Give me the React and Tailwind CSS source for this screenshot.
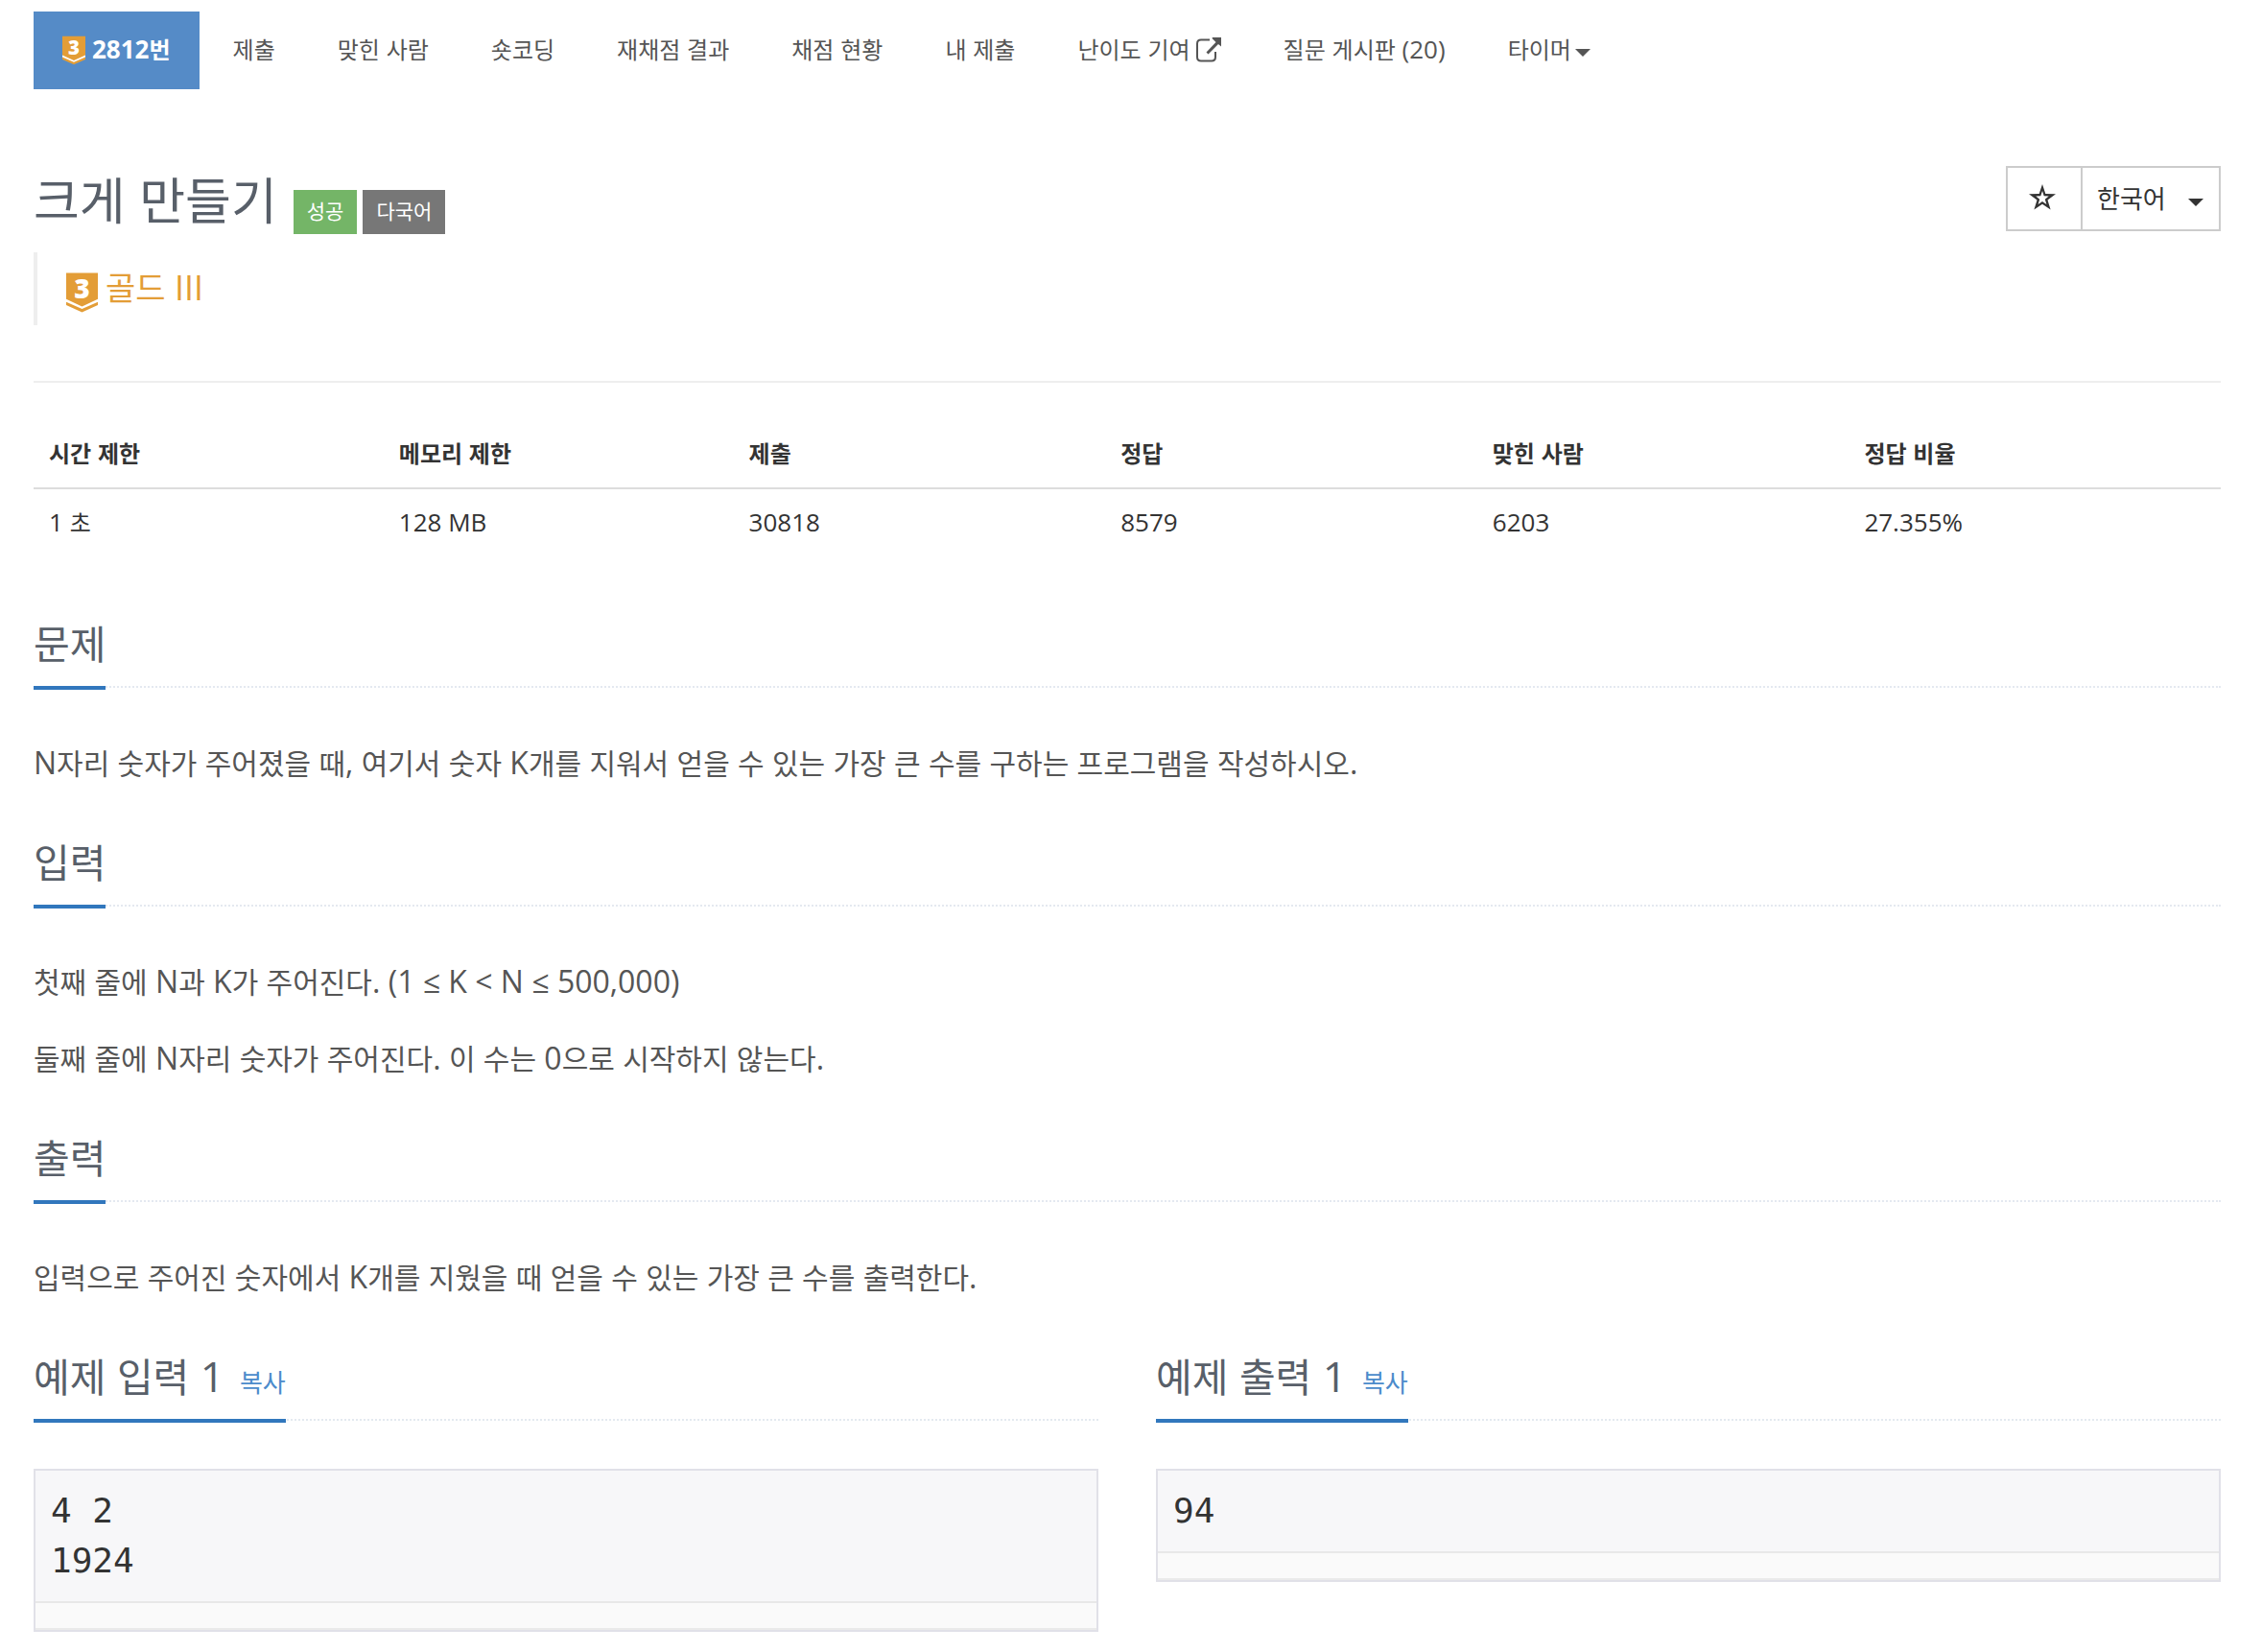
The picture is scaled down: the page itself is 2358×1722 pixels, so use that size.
const LATIN = /([ A-Za-z0-9(),.≤<%]+)/;

// Hangul glyphs use the surrounding size; Latin runs and spaces are set slightly larger.
function Mixed({ children, latin }) {
  return children.split(LATIN).map((part, i) =>
    i % 2 ? (
      <span key={i} className={latin}>
        {part}
      </span>
    ) : (
      part
    )
  );
}

function TierBadge({ className }) {
  return (
    <svg viewBox="0 0 34 42" overflow="visible" className={className} aria-hidden="true">
      <path d="M0 27L17 34.500L34 27V33L17 40.500L0 33Z" fill="#fff" />
      <path d="M0 0H34V28L17 36L0 28Z" fill="#e39d37" />
      <path d="M0 31L17 38.500L34 31V34.500L17 42L0 34.500Z" fill="#e39d37" />
      <text x="17" y="27" textAnchor="middle" fontSize="29" className="fill-white font-['Open_Sans',sans-serif] font-extrabold">
        3
      </text>
    </svg>
  );
}

function Caret({ className }) {
  return (
    <svg viewBox="0 0 16 8" className={className} aria-hidden="true">
      <path d="M0 0H16L8 8Z" fill="currentColor" />
    </svg>
  );
}

function ExternalIcon() {
  return (
    <svg viewBox="0 0 26 26" className="size-[26px]" aria-hidden="true">
      <path
        d="M14 2.500H5Q1 2.500 1 6.500V20.500Q1 24.500 5 24.500H16Q20 24.500 20 20.500V15"
        fill="none"
        stroke="currentColor"
        strokeWidth="2"
      />
      <path d="M17 0H26V9.500L23 7L12.500 17.500L10.500 15.500L20.500 5L16.500 1Z" fill="currentColor" />
    </svg>
  );
}

const navItems = [
  { label: "제출" },
  { label: "맞힌 사람" },
  { label: "숏코딩" },
  { label: "재채점 결과" },
  { label: "채점 현황" },
  { label: "내 제출" },
  { label: "난이도 기여", icon: true },
  { label: "질문 게시판 (20)" },
];

function Nav() {
  return (
    <nav className="flex h-[81px] items-stretch gap-[5px] text-[24px] text-[#555]">
      <a href="#problem" className="flex items-center gap-[7px] bg-[#558bc7] px-[30px] pb-[2px] font-bold text-white">
        <TierBadge className="mt-[2px] h-[31px] w-6" />
        <span>
          <Mixed latin="text-[26px] leading-none">2812번</Mixed>
        </span>
      </a>
      {navItems.map((item) => (
        <a key={item.label} href="#nav" className="flex items-center gap-[6px] px-[30px] pb-[2px]">
          <span>
            <Mixed latin="text-[26px] leading-none">{item.label}</Mixed>
          </span>
          {item.icon && <ExternalIcon />}
        </a>
      ))}
      <button type="button" className="flex items-center gap-1 px-[30px] pb-[2px]">
        타이머
        <Caret className="mt-[6px] h-2 w-4" />
      </button>
    </nav>
  );
}

function Headline({ children, action }) {
  return (
    <div className="flex border-b-2 border-dotted border-[#e4e9f0]">
      <div className="-mb-1 flex items-baseline gap-4 border-b-4 border-[#3177bd] pb-[14px]">
        <h2 className="text-[41px] leading-[60px] text-[#585f69]">
          <Mixed latin="text-[44px] leading-none">{children}</Mixed>
        </h2>
        {action && (
          <button type="button" className="text-[26px] text-[#4b8bcb]">
            {action}
          </button>
        )}
      </div>
    </div>
  );
}

function Section({ title, paragraphs }) {
  return (
    <section className="mb-[43px]">
      <Headline>{title}</Headline>
      <div className="mt-[49px] flex flex-col gap-5">
        {paragraphs.map((p) => (
          <p key={p} className="text-[30px] leading-[60px] text-[#555]">
            <Mixed latin="text-[32px] leading-none">{p}</Mixed>
          </p>
        ))}
      </div>
    </section>
  );
}

function Sample({ title, text }) {
  return (
    <section>
      <Headline action="복사">{title}</Headline>
      <div className="mt-[50px] border-2 border-[#e1e1e8] bg-[#fafafa]">
        <pre className="border-b-2 border-[#e8e8e8] bg-[#f7f7f9] p-4 font-['DejaVu_Sans_Mono',monospace] text-[36px] leading-[52px] text-[#333]">
          {text}
        </pre>
        <div className="h-7 border-b-2 border-[#eaeaea]" />
      </div>
    </section>
  );
}

const stats = [
  ["시간 제한", "1 초", "w-[16%]"],
  ["메모리 제한", "128 MB", "w-[16%]"],
  ["제출", "30818", "w-[17%]"],
  ["정답", "8579", "w-[17%]"],
  ["맞힌 사람", "6203", "w-[17%]"],
  ["정답 비율", "27.355%", "w-[17%]"],
];

export default function App() {
  return (
    <div className="bg-white pt-3 pr-[43px] pb-5 pl-[35px] font-['Open_Sans','Noto_Sans_CJK_KR',sans-serif] text-[#333]">
      <Nav />

      <header className="mt-20 flex items-start justify-between">
        <div className="flex items-end">
          <h1 className="text-[52px] leading-[71px] text-[#585f69]">
            <Mixed latin="text-[56px] leading-none">크게 만들기</Mixed>
          </h1>
          <div className="ml-[17px] flex gap-[6px] text-[21px] text-white">
            <span className="flex h-[46px] items-center bg-[#74b567] px-[14px]">성공</span>
            <span className="flex h-[46px] items-center bg-[#777] px-[14px]">다국어</span>
          </div>
        </div>
        <div className="flex h-[68px] border-2 border-[#ccc]">
          <button type="button" aria-label="즐겨찾기" className="flex w-[78px] items-center justify-center border-r-2 border-[#ccc] pr-1 pb-1">
            <svg viewBox="0 0 28 27" className="h-[27px] w-7" aria-hidden="true">
              <path
                d="M14 0L17.300 9.900L28 10.200L19.500 16.600L22.600 26.600L14 20.700L5.400 26.600L8.500 16.600L0 10.200L10.700 9.900ZM14 7L12.300 12.300L7.300 12.600L11.200 15.700L9.600 21L14 17.900L18.400 21L16.800 15.700L20.700 12.600L15.700 12.300Z"
                fill="currentColor"
                fillRule="evenodd"
              />
            </svg>
          </button>
          <div className="relative flex w-[142px]">
            <select aria-label="언어" className="w-full appearance-none bg-transparent pl-[15px] text-[26px]">
              <option>한국어</option>
            </select>
            <Caret className="pointer-events-none absolute top-8 right-4 h-2 w-4" />
          </div>
        </div>
      </header>

      <div className="mt-[19px] flex h-[76px] items-center gap-2 border-l-4 border-[#eee] pl-[30px] text-[34px] text-[#e39d37]">
        <TierBadge className="mt-2 h-[42px] w-[33px]" />
        <a href="#tier" className="pb-[2px]">
          <Mixed latin="text-[36px] leading-none">골드 III</Mixed>
        </a>
      </div>

      <hr className="mt-[58px] border-t-2 border-[#eee]" />

      <table className="mt-[38px] w-full table-fixed text-left text-[24px]">
        <thead>
          <tr className="h-[72px] border-b-2 border-[#ddd]">
            {stats.map(([label, , width]) => (
              <th key={label} className={`${width} px-4 font-bold`}>
                <Mixed latin="text-[26px] leading-none">{label}</Mixed>
              </th>
            ))}
          </tr>
        </thead>
        <tbody>
          <tr className="h-[70px]">
            {stats.map(([label, value]) => (
              <td key={label} className="px-4">
                <Mixed latin="text-[26px] leading-none">{value}</Mixed>
              </td>
            ))}
          </tr>
        </tbody>
      </table>

      <main className="mt-[62px]">
        <Section
          title="문제"
          paragraphs={["N자리 숫자가 주어졌을 때, 여기서 숫자 K개를 지워서 얻을 수 있는 가장 큰 수를 구하는 프로그램을 작성하시오."]}
        />
        <Section
          title="입력"
          paragraphs={[
            "첫째 줄에 N과 K가 주어진다. (1 ≤ K < N ≤ 500,000)",
            "둘째 줄에 N자리 숫자가 주어진다. 이 수는 0으로 시작하지 않는다.",
          ]}
        />
        <Section title="출력" paragraphs={["입력으로 주어진 숫자에서 K개를 지웠을 때 얻을 수 있는 가장 큰 수를 출력한다."]} />
        <div className="grid grid-cols-2 items-start gap-[60px]">
          <Sample title="예제 입력 1" text={"4 2\n1924"} />
          <Sample title="예제 출력 1" text="94" />
        </div>
      </main>
    </div>
  );
}
